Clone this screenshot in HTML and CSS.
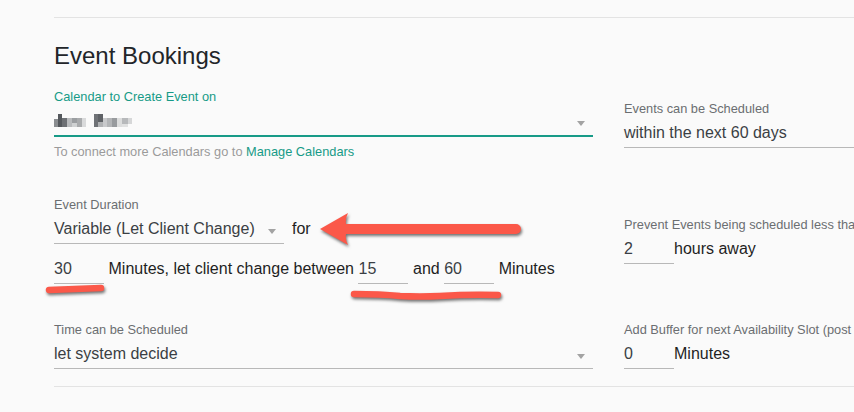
FILE: index.html
```html
<!DOCTYPE html>
<html lang="en">
<head>
<meta charset="utf-8">
<title>Event Bookings</title>
<link rel="stylesheet" href="styles.css">
</head>
<body>
<div class="page">
  <section class="bookings">
    <h2 class="title">Event Bookings</h2>
    <div class="grid">
      <div class="field">
        <div class="label label-active">Calendar to Create Event on</div>
        <div class="select select-active">
          <span class="value">
            <svg class="blurred" width="80" height="14" viewBox="0 0 80 14" aria-label="blurred name">
              <rect x="0" y="5" width="4" height="8" fill="#8a8d90"/>
              <rect x="4" y="0" width="4" height="13" fill="#54585c"/>
              <rect x="8" y="4" width="5" height="9" fill="#6d7074"/>
              <rect x="13" y="4" width="5" height="9" fill="#b9bbbd"/>
              <rect x="18" y="4" width="5" height="5" fill="#9b9ea1"/>
              <rect x="18" y="9" width="5" height="4" fill="#cfd1d2"/>
              <rect x="23" y="4" width="5" height="9" fill="#a9abad"/>
              <rect x="28" y="4" width="4" height="9" fill="#d9dadb"/>
              <rect x="40" y="0" width="4" height="13" fill="#6f7276"/>
              <rect x="44" y="0" width="5" height="8" fill="#5f6266"/>
              <rect x="44" y="8" width="5" height="5" fill="#b0b2b4"/>
              <rect x="49" y="4" width="4" height="9" fill="#c8c9cb"/>
              <rect x="53" y="4" width="5" height="9" fill="#b3b5b7"/>
              <rect x="58" y="4" width="5" height="9" fill="#989b9e"/>
              <rect x="63" y="4" width="5" height="9" fill="#dcdddd"/>
              <rect x="68" y="4" width="6" height="6" fill="#b7b9bb"/>
              <rect x="68" y="10" width="6" height="3" fill="#e0e1e1"/>
              <rect x="74" y="4" width="4" height="6" fill="#d6d7d8"/>
            </svg>
          </span>
          <span class="caret"></span>
        </div>
        <div class="helper">To connect more Calendars go to <a class="link">Manage Calendars</a></div>
      </div>

      <div class="field">
        <div class="label">Events can be Scheduled</div>
        <div class="select select-wide"><span class="value">within the next 60 days</span></div>
      </div>

      <div class="field">
        <div class="label">Event Duration</div>
        <div class="inline-row">
          <div class="select select-duration"><span class="value">Variable (Let Client Change)</span><span class="caret"></span></div>
          <span class="text text-for">for</span>
        </div>
        <div class="inline-row inline-row-spaced">
          <div class="input">30</div>
          <span class="text">Minutes, let client change between</span>
          <div class="input">15</div>
          <span class="text">and</span>
          <div class="input">60</div>
          <span class="text">Minutes</span>
        </div>
      </div>

      <div class="field">
        <div class="label">Prevent Events being scheduled less than</div>
        <div class="inline-row">
          <div class="input">2</div>
          <span class="text">hours away</span>
        </div>
      </div>

      <div class="field">
        <div class="label">Time can be Scheduled</div>
        <div class="select"><span class="value">let system decide</span><span class="caret"></span></div>
      </div>

      <div class="field">
        <div class="label">Add Buffer for next Availability Slot (post event)</div>
        <div class="inline-row">
          <div class="input">0</div>
          <span class="text">Minutes</span>
        </div>
      </div>
    </div>
  </section>

  <svg class="annotations" width="854" height="412" viewBox="0 0 854 412" aria-hidden="true">
    <path class="mark" d="M320,229 L348,213 Q345,219 346,224 L516,224 A5,5 0 0 1 516,234 L346,234 Q345,239 348,245 Z"/>
    <path class="stroke" d="M49,290 Q75,289 101,288"/>
    <path class="stroke" d="M354,294 Q380,294 400,296 Q420,297 440,296 Q470,294 498,295"/>
  </svg>
</div>
</body>
</html>
```

FILE: styles.css
```css
html, body {
  margin: 0;
  padding: 0;
  overflow: hidden;
  background: #fafafa;
}

body {
  font-family: "Liberation Sans", Arial, Helvetica, sans-serif;
  font-size: 16px;
  color: #1f1f1f;
}

.page {
  position: relative;
  width: 960px;
  height: 412px;
  padding: 17px 0 0 54px;
  box-sizing: border-box;
}

.bookings {
  border-top: 1px solid #e3e3e3;
  border-bottom: 1px solid #e3e3e3;
}

.title {
  margin: 23px 0 19px;
  font-size: 24px;
  line-height: 29px;
  font-weight: 400;
  color: #222529;
}

.grid {
  display: grid;
  grid-template-columns: 539px 320px;
  column-gap: 31px;
  row-gap: 38px;
  align-items: center;
  padding-bottom: 17px;
}

.field {
  display: flex;
  flex-direction: column;
  min-width: 0;
}

.label {
  font-size: 12.8px;
  line-height: 15px;
  color: #6b6e71;
  white-space: nowrap;
}

.label-active {
  color: #179a87;
}

.select {
  box-sizing: border-box;
  height: 32px;
  padding-top: 2px;
  line-height: 29px;
  border-bottom: 1px solid #b8b8b8;
  display: flex;
  justify-content: space-between;
  align-items: flex-start;
  color: #3a3f44;
  white-space: nowrap;
}

.select-active {
  height: 33px;
  border-bottom: 2px solid #179a87;
}

.select-duration {
  width: 230px;
  flex: none;
}

.blurred {
  display: block;
  margin-top: 8px;
}

.caret {
  width: 0;
  height: 0;
  margin-top: 15px;
  margin-right: 8px;
  border-left: 4px solid transparent;
  border-right: 4px solid transparent;
  border-top: 5px solid #a3a3a3;
}

.helper {
  margin-top: 7px;
  font-size: 12.8px;
  line-height: 15px;
  color: #9a9a9a;
  white-space: nowrap;
}

.link {
  color: #179a87;
  text-decoration: none;
}

.inline-row {
  display: flex;
  align-items: flex-start;
  white-space: nowrap;
}

.inline-row-spaced {
  margin-top: 8px;
  column-gap: 4.5px;
}

.input {
  box-sizing: border-box;
  width: 50px;
  height: 32px;
  flex: none;
  padding-top: 2px;
  line-height: 29px;
  border-bottom: 1px solid #b8b8b8;
  color: #3a3f44;
}

.text {
  padding-top: 2px;
  line-height: 29px;
  color: #1f1f1f;
}

.text-for {
  margin-left: 8px;
}

.annotations {
  position: absolute;
  left: 0;
  top: 0;
  pointer-events: none;
  overflow: visible;
}

.mark {
  fill: #fb5849;
  filter: drop-shadow(1px 2px 1.5px rgba(0, 0, 0, 0.55));
}

.stroke {
  fill: none;
  stroke: #fb5849;
  stroke-width: 6.5;
  stroke-linecap: round;
  filter: drop-shadow(1px 2px 1.5px rgba(0, 0, 0, 0.55));
}
```
